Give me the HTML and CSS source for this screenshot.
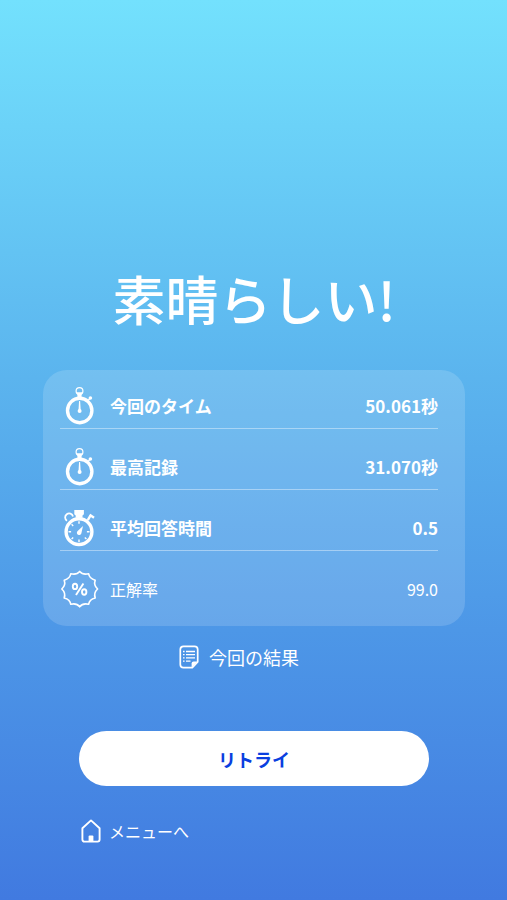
FILE: index.html
```html
<!DOCTYPE html>
<html lang="ja">
<head>
<meta charset="utf-8">
<meta name="viewport" content="width=device-width, initial-scale=1">
<title>素晴らしい!</title>
<link rel="stylesheet" href="styles.css">
</head>
<body>
<svg class="symbols" aria-hidden="true">
    <symbol id="stopwatch" viewBox="0 0 40 44">
        <circle cx="19.7" cy="26.5" r="12.2" fill="none" stroke="currentColor" stroke-width="3.4"/>
        <circle cx="19.5" cy="7" r="3.4" fill="none" stroke="currentColor" stroke-width="1.2"/>
        <path d="M16.2 8.2h6.6l-1.2 2.6v2.6h-4.2v-2.6z" fill="currentColor"/>
        <path d="M28.2 16.2l2-2" stroke="currentColor" stroke-width="1.4"/>
        <circle cx="30.4" cy="14" r="1.8" fill="currentColor"/>
        <path d="M19.1 17h1l.6 9h-2.2z" fill="currentColor"/>
        <circle cx="19.6" cy="27" r="2" fill="currentColor"/>
    </symbol>
</svg>
<main class="page">
    <h1 class="title">素晴らしい!</h1>

    <dl class="card">
        <div class="row">
            <dt><svg class="row-icon"><use href="#stopwatch"/></svg>今回のタイム</dt>
            <dd>50.061秒</dd>
        </div>
        <div class="row">
            <dt><svg class="row-icon"><use href="#stopwatch"/></svg>最高記録</dt>
            <dd>31.070秒</dd>
        </div>
        <div class="row">
            <dt>
                <svg class="row-icon" viewBox="0 0 40 44">
                    <circle cx="19" cy="25.7" r="12.9" fill="none" stroke="currentColor" stroke-width="3.4"/>
                    <path d="M14.3 4h9.6v4.2l-1.4 1.2v2.4h-6.8V9.4l-1.4-1.2z" fill="currentColor"/>
                    <path d="M7 14.8a4 4 0 1 1 6-4.4" fill="none" stroke="currentColor" stroke-width="1.8"/>
                    <path d="M27.8 14.2l2.6-4.6M29.6 8.6l4.4 3.2" fill="none" stroke="currentColor" stroke-width="2.4"/>
                    <path d="M19 15.2v2.6M19 33.6v2.6M8.5 25.7h2.6M26.9 25.7h2.6M11.6 18.3l1.6 1.6M24.8 31.5l1.6 1.6M11.6 33.1l1.6-1.6" stroke="currentColor" stroke-width="1.4"/>
                    <path d="M23 20l-1.6 7.2a2.3 2.3 0 1 1-4-2z" fill="currentColor"/>
                </svg>平均回答時間
            </dt>
            <dd>0.5</dd>
        </div>
        <div class="row row-light">
            <dt>
                <svg class="row-icon" viewBox="0 0 40 44">
                    <path d="M19.7 4.4Q22.8 8.2 28.6 6.7Q29.4 11.6 35.2 13.2Q33.4 18 37.6 22Q33.4 26 35.2 30.9Q29.4 32.4 28.6 37.3Q22.8 35.8 19.7 39.8Q16.6 35.8 10.8 37.3Q10 32.4 4.2 30.9Q6 26 1.8 22Q6 18 4.2 13.2Q10 11.6 10.8 6.7Q16.6 8.2 19.7 4.4Z" fill="none" stroke="currentColor" stroke-width="1.6" stroke-linejoin="round"/>
                    <g fill="none" stroke="currentColor" stroke-width="1.9">
                        <ellipse cx="15" cy="19.4" rx="2.2" ry="2.7"/>
                        <ellipse cx="24.2" cy="25" rx="2.2" ry="2.7"/>
                        <path d="M23.4 16.4l-7.4 11.6"/>
                    </g>
                </svg>正解率
            </dt>
            <dd>99.0</dd>
        </div>
    </dl>

    <a class="link link-results" href="#">
        <svg class="link-icon" viewBox="0 0 20 24">
            <g fill="none" stroke="currentColor" stroke-linejoin="round">
                <path d="M4.5 1.4h11a3.2 3.2 0 0 1 3.2 3.2V17l-5.4 5.6H4.5a3.2 3.2 0 0 1-3.2-3.2V4.6a3.2 3.2 0 0 1 3.2-3.2z" stroke-width="1.7"/>
                <path d="M4 6.5h1.6M7 6.5h9M4 9.7h1.6M7 9.7h9M4 12.9h1.6M7 12.9h9M4 16.1h1.6M7 16.1h4.5" stroke-width="1.3"/>
            </g>
            <path d="M12.6 22.6v-4a2 2 0 0 1 2-2h4.2z" fill="currentColor"/>
        </svg>
        今回の結果
    </a>

    <button class="retry" type="button">リトライ</button>

    <a class="link link-menu" href="#">
        <svg class="link-icon" viewBox="0 0 20 24">
            <path d="M1.4 9.2L10 1.4l8.6 7.8v11.4a2 2 0 0 1-2 2H3.4a2 2 0 0 1-2-2z" fill="none" stroke="currentColor" stroke-width="1.9" stroke-linejoin="round"/>
            <path d="M7.6 22.5v-5a1 1 0 0 1 1-1h2.8a1 1 0 0 1 1 1v5z" fill="currentColor"/>
        </svg>
        メニューへ
    </a>
</main>
</body>
</html>
```

FILE: styles.css
```css
body {
    margin: 0;
    min-height: 100vh;
    color: #fff;
    background: linear-gradient(#73e1fd 0%, #5bb4ee 42%, #4d97e7 70%, #417ae0 100%);
    font-family: "Noto Sans CJK JP", sans-serif;
    font-size: 16px;
}

.symbols {
    display: none;
}

.page {
    display: flex;
    flex-direction: column;
    padding: 258px 42px 48px 43px;
}

.title {
    margin: 0 0 32px;
    font-size: 53px;
    font-weight: 500;
    line-height: 80px;
    text-align: center;
}

.card {
    margin: 0;
    padding: 14px 27px 15px 17px;
    border-radius: 24px;
    background: rgba(255, 255, 255, 0.15);
}

.row {
    display: flex;
    justify-content: space-between;
    height: 44px;
    line-height: 44px;
    font-size: 17px;
    font-weight: 700;
}

.row + .row {
    margin-top: 16px;
}

.row:not(:last-child) {
    border-bottom: 1px solid rgba(255, 255, 255, 0.4);
}

.row dt {
    display: flex;
    gap: 10px;
}

.row dd {
    margin: 0;
}

.row-light {
    font-size: 16px;
    font-weight: 400;
}

.row-icon {
    width: 40px;
    height: 44px;
}

.link {
    display: flex;
    align-items: center;
    color: #fff;
    line-height: 22px;
    text-decoration: none;
}

.link-icon {
    width: 20px;
    height: 24px;
}

.link-results {
    align-self: center;
    gap: 10px;
    margin: 19px 30px 62px 0;
    font-size: 18px;
}

.retry {
    height: 55px;
    margin: 0 36px 33px;
    border: 0;
    border-radius: 28px;
    color: #0a3fe0;
    background: #fff;
    font-family: inherit;
    font-size: 18px;
    font-weight: 700;
}

.link-menu {
    align-self: flex-start;
    gap: 8px;
    margin-left: 38px;
}
```
